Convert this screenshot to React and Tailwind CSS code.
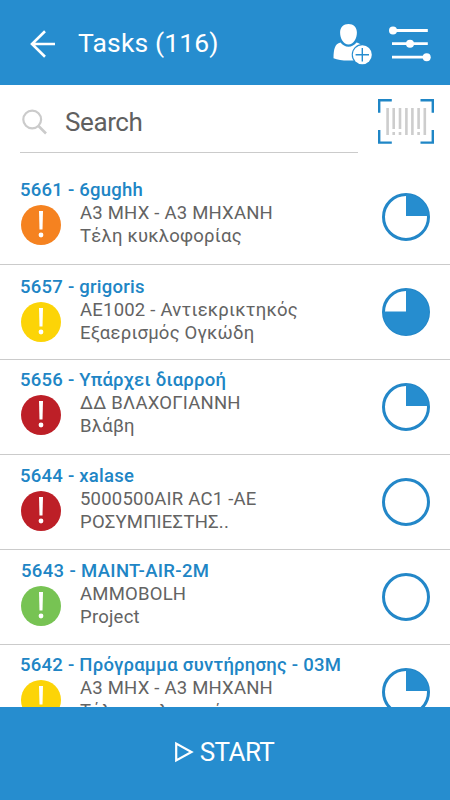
const tasks = [
	{
		title: '5661 - 6gughh',
		lines: ['Α3 ΜΗΧ - Α3 ΜΗΧΑΝΗ', 'Τέλη κυκλοφορίας'],
		color: 'bg-[#f58220]',
		progress: 25,
		padding: 'pt-[8px]',
	},
	{
		title: '5657 - grigoris',
		lines: ['ΑΕ1002 - Αντιεκρικτηκός', 'Εξαερισμός Ογκώδη'],
		color: 'bg-[#fcd407]',
		progress: 75,
		padding: 'pt-[10px]',
	},
	{
		title: '5656 - Υπάρχει διαρροή',
		lines: ['ΔΔ ΒΛΑΧΟΓΙΑΝΝΗ', 'Βλάβη'],
		color: 'bg-[#bd1f27]',
		progress: 25,
		padding: 'pt-[8px]',
	},
	{
		title: '5644 - xalase',
		lines: ['5000500AIR AC1 -AE', 'ΡΟΣΥΜΠΙΕΣΤΗΣ..'],
		color: 'bg-[#bd1f27]',
		progress: 0,
		padding: 'pt-[9px]',
	},
	{
		title: '5643 - MAINT-AIR-2M',
		lines: ['AMMOBOLH', 'Project'],
		color: 'bg-[#77c353]',
		progress: 0,
		padding: 'pt-[9px]',
		tracking: 'pl-[1px] tracking-[0.35px]',
	},
	{
		title: '5642 - Πρόγραμμα συντήρησης - 03Μ',
		lines: ['Α3 ΜΗΧ - Α3 ΜΗΧΑΝΗ', 'Τέλη κυκλοφορίας'],
		color: 'bg-[#fcd407]',
		progress: 25,
		padding: 'pt-[8px]',
	},
];

function BackIcon() {
	return (
		<svg width="26" height="28" viewBox="0 0 26 28" fill="none" stroke="#fff">
			<path d="M15 1.200 2 14l13 12.800M2 14h23" strokeWidth="2.600" />
		</svg>
	);
}

function AddUserIcon() {
	return (
		<svg width="40" height="42" viewBox="0 0 40 42">
			<path
				d="M15.500 1c5 0 8.400 3.300 8.400 8.500 0 6-3.400 12-8.400 12s-8.400-6-8.400-12C7.100 4.300 10.500 1 15.500 1Z"
				fill="#fff"
			/>
			<path
				d="M7.500 19.500c2 2.700 4.800 4.200 8 4.200s6-1.500 8-4.200c4.500 1.300 7.500 4.500 7.500 9.500v7c-4.500 1.100-9.500 1.500-15.500 1.500-6.500 0-11-.6-15-2.300.2-8.700 1-14.200 7-15.700Z"
				fill="#fff"
			/>
			<circle cx="29.300" cy="31.700" r="10.600" fill="#268dcf" />
			<circle cx="29.300" cy="31.700" r="9.500" fill="#fff" />
			<path d="M29.300 25v13.400M22.600 31.700H36" stroke="#268dcf" strokeWidth="1.400" />
		</svg>
	);
}

function FilterIcon() {
	return (
		<svg width="42" height="36" viewBox="0 0 42 36" fill="#fff">
			<path d="M3 4.500h35.800M3 17.700h35.800M3 31.200h35.800" stroke="#fff" strokeWidth="2.800" />
			<circle cx="4" cy="4.600" r="4" />
			<circle cx="21" cy="17.800" r="4" />
			<circle cx="37.700" cy="31.200" r="4" />
		</svg>
	);
}

function SearchIcon() {
	return (
		<svg width="25" height="26" viewBox="0 0 25 26" fill="none" stroke="#cbcbcb">
			<circle cx="10.200" cy="10.500" r="8.900" strokeWidth="2.200" />
			<path d="m16.500 17 7.500 7.500" strokeWidth="2.600" />
		</svg>
	);
}

function BarcodeIcon() {
	return (
		<svg width="56" height="45" viewBox="0 0 56 45" fill="none">
			<path
				d="M1.200 13.700V1.200h12.600M42.500 1.200h12.300v12.500M54.800 31v12.600H42.500M13.800 43.600H1.200V31"
				stroke="#1f86c6"
				strokeWidth="2.400"
			/>
			<path
				d="M9.600 9v27M15.700 9v21M22 9v21M28.400 9v27M34.400 9v27M40.600 9v21M46.800 9v27M15.700 33v3M22 33v3M40.600 33v3"
				stroke="#cdcdcd"
				strokeWidth="2.600"
			/>
		</svg>
	);
}

function Progress({ value }) {
	return (
		<svg width="48" height="48" viewBox="0 0 48 48" className="mt-[23px] shrink-0">
			<circle cx="24" cy="24" r="22.500" fill="#fff" stroke="#2387c8" strokeWidth="3" />
			{value === 25 && <path d="M24 23V1a23 23 0 0 1 23 22Z" fill="#268dcf" />}
			{value === 75 && <path d="M24 23.500V1a23 23 0 1 1-23 22.500Z" fill="#268dcf" />}
		</svg>
	);
}

function Task({ task }) {
	return (
		<li className="flex h-[95px] shrink-0 justify-between border-b border-[#cbcbcb] pl-5 pr-5">
			<div className={task.padding}>
				<h2
					className={`whitespace-nowrap text-[18.500px] leading-[24px] font-medium text-[#2085c5] ${task.tracking || 'tracking-[0.25px]'}`}
				>
					{task.title}
				</h2>
				<div className="flex gap-[19px]">
					<div
						className={`mt-[2.500px] ml-[1px] flex size-10 flex-col items-center justify-center rounded-full ${task.color}`}
					>
						<svg width="6" height="27" viewBox="0 0 6 27" fill="#fff">
							<path d="M1 0h4l-.5 18.500h-3Z" />
							<circle cx="3" cy="24" r="2.400" />
						</svg>
					</div>
					<div className="whitespace-nowrap text-[18.500px] leading-[22.500px] tracking-[0.22px] text-[#636363]">
						{task.lines.map((line) => (
							<p key={line}>{line}</p>
						))}
					</div>
				</div>
			</div>
			<Progress value={task.progress} />
		</li>
	);
}

export default function App() {
	return (
		<div className="flex h-[800px] w-[450px] flex-col overflow-hidden bg-white font-['Roboto','Noto_Sans',sans-serif]">
			<header className="flex h-[85px] shrink-0 items-center bg-[#268dcf] pl-[30px] pr-[19px] text-white">
				<button className="mt-[3px]" aria-label="Back">
					<BackIcon />
				</button>
				<h1 className="ml-[22px] flex-1 text-[26.500px] leading-8 tracking-[0.15px]">Tasks (116)</h1>
				<div className="mt-[3px] flex items-center gap-4">
					<AddUserIcon />
					<FilterIcon />
				</div>
			</header>
			<div className="flex h-[85px] shrink-0 justify-between pl-5 pr-4">
				<div className="flex h-[68px] w-[338px] items-center gap-[18px] border-b border-[#cbcbcb] pl-[2px] pt-[6px]">
					<SearchIcon />
					<span className="text-[26px] leading-8 tracking-[-0.4px] text-[#606060]">Search</span>
				</div>
				<div className="pt-[14px]">
					<BarcodeIcon />
				</div>
			</div>
			<ul className="flex min-h-0 flex-1 flex-col overflow-hidden">
				{tasks.map((task) => (
					<Task key={task.title} task={task} />
				))}
			</ul>
			<button className="flex h-[93px] shrink-0 items-center justify-center gap-[6px] bg-[#268dcf] pr-[2px] pb-[3px] text-[26px] leading-8 tracking-[-0.6px] text-white">
				<svg width="20" height="22" viewBox="0 0 20 22" fill="none" stroke="#fff">
					<path d="M2.200 2.500v17L17.500 11Z" strokeWidth="2.200" />
				</svg>
				START
			</button>
		</div>
	);
}
